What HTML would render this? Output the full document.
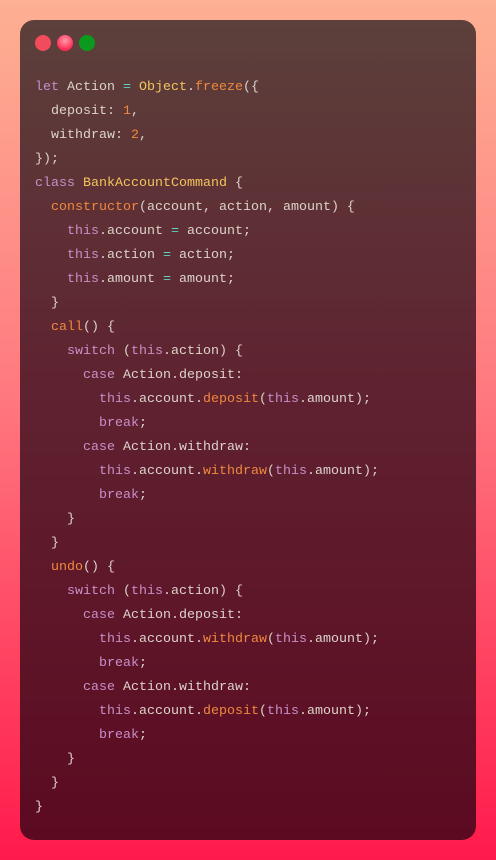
<!DOCTYPE html>
<html><head><style>
html,body{margin:0;padding:0;}
body{width:496px;height:860px;background:linear-gradient(180deg,#fdb093 0%,#ff7a80 45%,#ff1a4c 100%);position:relative;overflow:hidden;}
.card{position:absolute;left:20px;top:20px;width:456px;height:820px;border-radius:14px;background:linear-gradient(180deg,#5c403b 0%,#5f2230 45%,#5c0a21 100%);}
.dot{position:absolute;top:15px;width:16px;height:16px;border-radius:50%;}
pre{position:absolute;left:15px;top:56px;margin:0;font-family:"Liberation Mono",monospace;font-size:13.33px;line-height:24px;color:#ddd3cc;}
.k{color:#c98fc9}.f{color:#f0883e}.y{color:#f2c55c}.n{color:#f0883e}.o{color:#5fd3c4}
</style></head><body>
<div class="card">
<div class="dot" style="left:15px;background:#f24b5b"></div>
<div class="dot" style="left:37px;background:radial-gradient(circle at 50% 35%,#ff9aa8,#ff2a55 70%)"></div>
<div class="dot" style="left:59px;background:#0b9a1d"></div>
<pre><span class="k">let</span> Action <span class="o">=</span> <span class="y">Object</span>.<span class="f">freeze</span>({
  deposit: <span class="n">1</span>,
  withdraw: <span class="n">2</span>,
});
<span class="k">class</span> <span class="y">BankAccountCommand</span> {
  <span class="f">constructor</span>(account, action, amount) {
    <span class="k">this</span>.account <span class="o">=</span> account;
    <span class="k">this</span>.action <span class="o">=</span> action;
    <span class="k">this</span>.amount <span class="o">=</span> amount;
  }
  <span class="f">call</span>() {
    <span class="k">switch</span> (<span class="k">this</span>.action) {
      <span class="k">case</span> Action.deposit:
        <span class="k">this</span>.account.<span class="f">deposit</span>(<span class="k">this</span>.amount);
        <span class="k">break</span>;
      <span class="k">case</span> Action.withdraw:
        <span class="k">this</span>.account.<span class="f">withdraw</span>(<span class="k">this</span>.amount);
        <span class="k">break</span>;
    }
  }
  <span class="f">undo</span>() {
    <span class="k">switch</span> (<span class="k">this</span>.action) {
      <span class="k">case</span> Action.deposit:
        <span class="k">this</span>.account.<span class="f">withdraw</span>(<span class="k">this</span>.amount);
        <span class="k">break</span>;
      <span class="k">case</span> Action.withdraw:
        <span class="k">this</span>.account.<span class="f">deposit</span>(<span class="k">this</span>.amount);
        <span class="k">break</span>;
    }
  }
}</pre>
</div>
</body></html>
